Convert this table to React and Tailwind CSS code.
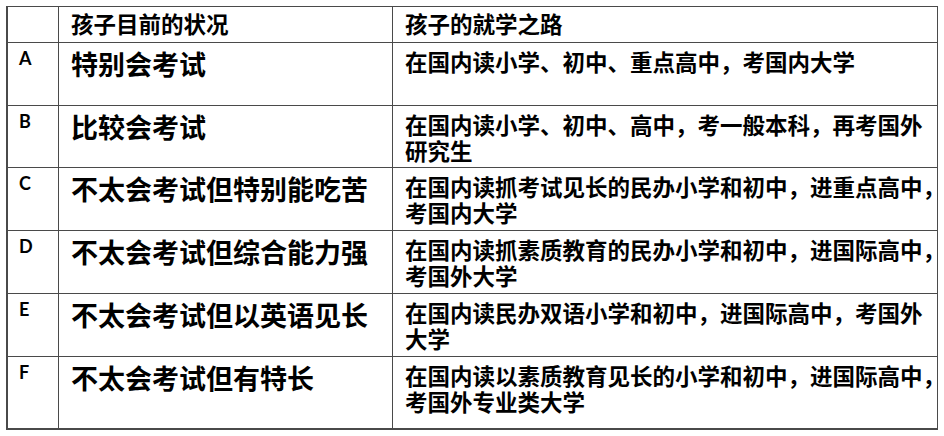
import React from 'react';

const rows = [
  { key: 'A', status: '特别会考试', path: ['在国内读小学、初中、重点高中，考国内大学'] },
  { key: 'B', status: '比较会考试', path: ['在国内读小学、初中、高中，考一般本科，再考国外', '研究生'] },
  { key: 'C', status: '不太会考试但特别能吃苦', path: ['在国内读抓考试见长的民办小学和初中，进重点高中，', '考国内大学'] },
  { key: 'D', status: '不太会考试但综合能力强', path: ['在国内读抓素质教育的民办小学和初中，进国际高中，', '考国外大学'] },
  { key: 'E', status: '不太会考试但以英语见长', path: ['在国内读民办双语小学和初中，进国际高中，考国外', '大学'] },
  { key: 'F', status: '不太会考试但有特长', path: ['在国内读以素质教育见长的小学和初中，进国际高中，', '考国外专业类大学'] },
];

const cell = 'border-r border-b border-[#4a4a4a] overflow-hidden';
const cjk = "font-['Noto_Sans_CJK_SC','Noto_Sans',sans-serif]";
const latin = "font-['Lato','Liberation_Sans',sans-serif]";

export default function App() {
  return (
    <div className="w-[944px] h-[436px] bg-white pl-[6px] pt-[6px] text-black">
      <div className="grid w-[932px] grid-cols-[51px_334px_545px] grid-rows-[36px_63px_62px_63px_63px_63px_73px] border-t border-l-2 border-[#4a4a4a]">
        {/* header */}
        <div className={cell}></div>
        <div className={`${cell} ${cjk} pl-3 pt-[3px] text-[22.5px] leading-[26px] font-bold whitespace-nowrap`}>
          孩子目前的状况
        </div>
        <div className={`${cell} ${cjk} pl-3 pt-[3px] text-[22.5px] leading-[26px] font-bold whitespace-nowrap`}>
          孩子的就学之路
        </div>

        {rows.map((r, i) => {
          const last = i === rows.length - 1 ? 'border-b-2' : '';
          return (
            <React.Fragment key={r.key}>
              <div className={`${cell} ${last} ${latin} pl-[11px] pt-[4px] text-[18px] leading-[22px] font-bold`}>
                {r.key}
              </div>
              <div className={`${cell} ${last} ${cjk} pl-3 pt-[6px] text-[27px] leading-[30px] font-bold whitespace-nowrap`}>
                {r.status}
              </div>
              <div className={`${cell} ${last} ${cjk} pl-3 pt-[5px] text-[22.5px] leading-[26px] font-bold whitespace-nowrap`}>
                {r.path.map((line, j) => (
                  <div key={j}>{line}</div>
                ))}
              </div>
            </React.Fragment>
          );
        })}
      </div>
    </div>
  );
}
